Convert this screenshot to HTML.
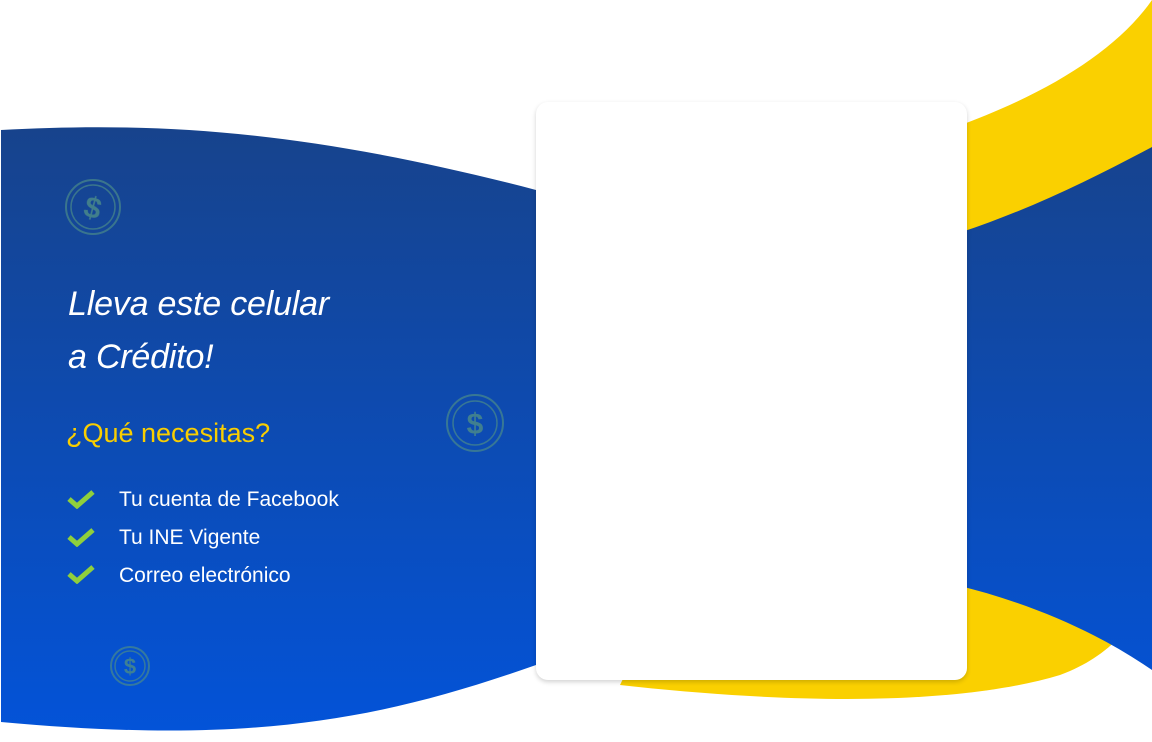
<!DOCTYPE html>
<html><head><meta charset="utf-8"><style>
html,body{margin:0;padding:0;width:1152px;height:742px;overflow:hidden;background:#fff;font-family:"Liberation Sans",sans-serif}
svg.bg{position:absolute;left:0;top:0}
.card{position:absolute;left:536px;top:102px;width:431px;height:578px;background:#fff;border-radius:12px;box-shadow:0 2px 5px rgba(0,0,0,.18)}
h1{position:absolute;left:68px;top:278px;margin:0;font-style:italic;font-weight:normal;font-size:34px;line-height:53px;color:#fff;letter-spacing:-0.2px}
.q{position:absolute;left:66px;top:418px;font-size:27px;color:#f9ce00}
.li{position:absolute;left:119px;font-size:21px;color:#fff}
.ck{position:absolute;left:67px}
</style></head><body>
<svg class="bg" width="1152" height="742" viewBox="0 0 1152 742">
<defs><linearGradient id="g" x1="0" y1="0" x2="0" y2="1"><stop offset="0" stop-color="#17438c"/><stop offset="1" stop-color="#0353d8"/></linearGradient></defs>
<path d="M1152 0 L1152 200 L900 260 L900 145 C1020 110 1110 60 1152 0Z" fill="#fad000"/>
<path d="M700 520 L1152 520 L1152 600 C1120 640 1100 660 1060 675 C960 705 800 705 620 685Z" fill="#fad000"/>
<path d="M1 130 C150 122 300 128 536 190 L900 250 C1000 225 1080 185 1152 147 L1152 670 C1050 600 920 565 760 560 L536 665 C380 720 250 745 1 722Z" fill="url(#g)"/>
<g fill="none" stroke="#4a8a8a" stroke-width="2" opacity=".7">
<circle cx="93" cy="207" r="27"/><circle cx="93" cy="207" r="22" stroke-width="1.5"/>
<circle cx="475" cy="423" r="28"/><circle cx="475" cy="423" r="22" stroke-width="1.5"/>
<circle cx="130" cy="666" r="19"/><circle cx="130" cy="666" r="15" stroke-width="1.5"/>
</g>
<g fill="#4a8a8a" opacity=".85" font-family="Liberation Sans" font-weight="bold" text-anchor="middle">
<text x="93" y="218" font-size="30" transform="rotate(15 93 207)">$</text>
<text x="475" y="434" font-size="30">$</text>
<text x="130" y="674" font-size="22">$</text>
</g>
</svg>
<div class="card"></div>
<h1>Lleva este celular<br>a Crédito!</h1>
<div class="q">¿Qué necesitas?</div>
<svg class="ck" style="top:489px" width="28" height="20"><path d="M2 10 L10 17 L26 3" stroke="#8fcf3c" stroke-width="5" fill="none"/></svg>
<svg class="ck" style="top:527px" width="28" height="20"><path d="M2 10 L10 17 L26 3" stroke="#8fcf3c" stroke-width="5" fill="none"/></svg>
<svg class="ck" style="top:564px" width="28" height="20"><path d="M2 10 L10 17 L26 3" stroke="#8fcf3c" stroke-width="5" fill="none"/></svg>
<div class="li" style="top:488px">Tu cuenta de Facebook</div>
<div class="li" style="top:526px">Tu INE Vigente</div>
<div class="li" style="top:564px">Correo electrónico</div>
</body></html>
